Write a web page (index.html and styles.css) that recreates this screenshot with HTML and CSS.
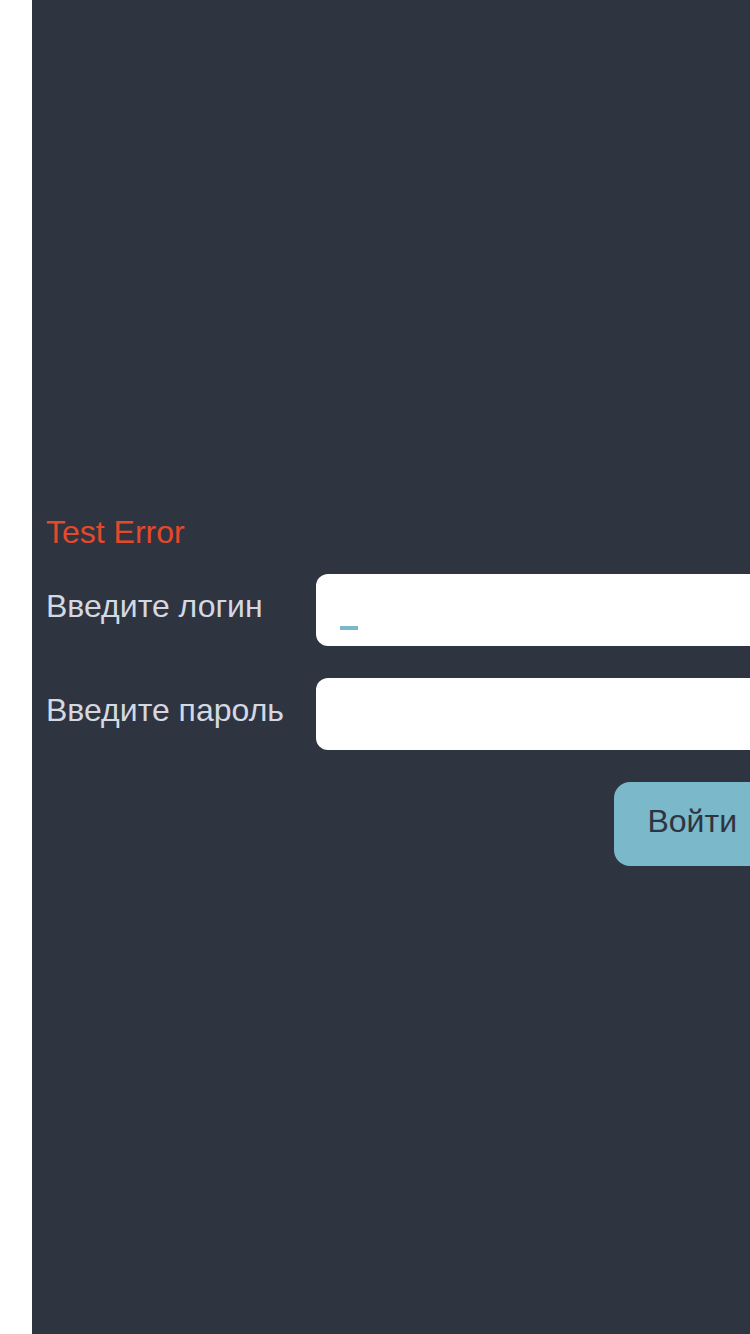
FILE: index.html
```html
<!DOCTYPE html>
<html lang="ru">
<head>
<meta charset="utf-8">
<link rel="stylesheet" href="styles.css">
</head>
<body>
<div class="panel">
  <form class="form">
    <div class="error">Test Error</div>
    <div class="row">
      <label class="label">Введите логин</label>
      <div class="field"><span class="caret"></span></div>
    </div>
    <div class="row">
      <label class="label">Введите пароль</label>
      <div class="field"></div>
    </div>
    <div class="actions">
      <button type="button" class="btn">Войти</button>
    </div>
  </form>
</div>
</body>
</html>
```
FILE: styles.css
```css
html, body {
  margin: 0;
  padding: 0;
  background: #ffffff;
  overflow: hidden;
  height: 1334px;
}
body {
  font-family: "Liberation Sans", Arial, sans-serif;
}
.panel {
  margin-left: 32px;
  width: 750px;
  height: 1334px;
  background: #2f3441;
  box-sizing: border-box;
  padding: 514px 14px 0 14px;
}
.form {
  display: flex;
  flex-direction: column;
}
.error {
  color: #e34a2a;
  font-size: 32px;
  line-height: 36px;
  margin-bottom: 24px;
}
.row {
  display: grid;
  grid-template-columns: 270px 1fr;
  align-items: center;
  margin-bottom: 32px;
}
.label {
  color: #d3d9e3;
  font-size: 32px;
  line-height: 36px;
  margin-bottom: 8px;
}
.field {
  position: relative;
  height: 72px;
  background: #ffffff;
  border-radius: 12px;
}
.caret {
  position: absolute;
  left: 24px;
  top: 52px;
  width: 18px;
  height: 4px;
  background: #7ab8ca;
}
.actions {
  display: flex;
  justify-content: flex-end;
}
.btn {
  height: 84px;
  padding: 0 31px 6px 33px;
  border: none;
  border-radius: 16px;
  background: #7ab8ca;
  color: #2f3441;
  font-family: "Liberation Sans", Arial, sans-serif;
  font-size: 32px;
}
```
